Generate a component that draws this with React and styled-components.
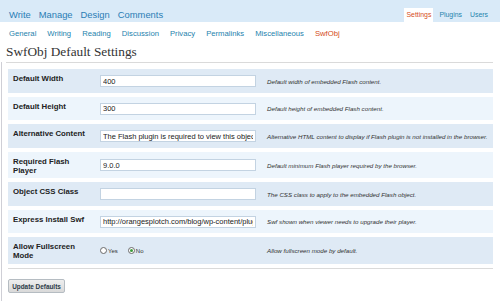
import styled, { createGlobalStyle } from "styled-components";

const GlobalStyle = createGlobalStyle`
  html, body {
    margin: 0;
    padding: 0;
    background: #ffffff;
    font-family: "Liberation Sans", Arial, sans-serif;
  }
`;

const Header = styled.div`
  height: 22px;
  background-color: #d9eaf8;
  display: flex;
  justify-content: space-between;
`;

const MainNav = styled.div`
  display: flex;
  gap: 8px;
  padding: 9px 0 0 9px;
  font-size: 9.4px;
  line-height: 12px;
`;

const NavLink = styled.span`
  color: #2a7db5;
`;

const Tabs = styled.div`
  display: flex;
  align-items: flex-end;
  gap: 4px;
  padding-right: 10px;
`;

const Tab = styled.span`
  height: 14px;
  line-height: 14px;
  padding: 0 2px;
  font-size: 6.9px;
  color: ${(props) => (props.active ? "#d54e21" : "#2583ad")};
  background-color: ${(props) => (props.active ? "#ffffff" : "transparent")};
`;

const SubNav = styled.div`
  height: 22px;
  display: flex;
  align-items: center;
  gap: 11px;
  padding-left: 9px;
  font-size: 7.7px;
`;

const SubLink = styled.span`
  color: ${(props) => (props.active ? "#d54e21" : "#2583ad")};
`;

const Title = styled.h2`
  margin: 0 0 0 6px;
  height: 16px;
  line-height: 16px;
  font-family: "Liberation Serif", "Times New Roman", serif;
  font-weight: normal;
  font-size: 13.3px;
  color: #333333;
`;

const Wrap = styled.div`
  margin-left: 1px;
  border-left: 1px solid #cfcfd6;
  padding-bottom: 8px;
`;

const Rule = styled.div`
  height: 1px;
  background-color: #dadada;
  margin: ${(props) => props.margin};
`;

const Table = styled.div`
  margin: 6px 7px 0 6px;
`;

const Row = styled.div`
  display: grid;
  grid-template-columns: 92px 167px 1fr;
  height: ${(props) => props.h}px;
  margin-bottom: 4px;
  background-color: ${(props) => (props.alt ? "#edf5fc" : "#dfeaf5")};
`;

const Label = styled.div`
  padding: 6px 14px 0 5px;
  font-size: 7.8px;
  line-height: 8.5px;
  font-weight: bold;
  color: #222222;
`;

const Field = styled.div`
  display: flex;
  align-items: center;
  gap: 10px;
`;

const Input = styled.input`
  box-sizing: border-box;
  width: 156px;
  height: 12px;
  margin: 0;
  padding: 0 2px;
  border: 1px solid #c3d3e2;
  background: #ffffff;
  font-family: "Liberation Sans", Arial, sans-serif;
  font-size: 7.5px;
  color: #222222;
  outline: none;
`;

const Desc = styled.div`
  display: flex;
  align-items: center;
  font-size: 6.2px;
  font-style: italic;
  color: #333333;
  white-space: nowrap;
`;

const Radio = styled.span`
  display: flex;
  align-items: center;
  gap: 1px;
  font-size: 6px;
  color: #333333;
`;

const Dot = styled.span`
  box-sizing: border-box;
  width: 7px;
  height: 7px;
  border-radius: 50%;
  border: 1px solid #6a6a6a;
  background: #ffffff;
  display: flex;
  align-items: center;
  justify-content: center;
  &::after {
    content: "";
    width: 3px;
    height: 3px;
    border-radius: 50%;
    background: ${(props) => (props.checked ? "#3c9a3c" : "transparent")};
  }
`;

const Button = styled.button`
  margin: 10px 0 0 6px;
  width: 57px;
  height: 14px;
  padding: 0;
  border: 1px solid #b5bcc2;
  border-radius: 2px;
  background: linear-gradient(#eeeeee, #d9d9d9);
  font-family: "Liberation Sans", Arial, sans-serif;
  font-size: 6.4px;
  font-weight: bold;
  color: #2c3a48;
`;

const rows = [
  { label: "Default Width", value: "400", desc: "Default width of embedded Flash content.", h: 24 },
  { label: "Default Height", value: "300", desc: "Default height of embedded Flash content.", h: 23 },
  {
    label: "Alternative Content",
    value: "The Flash plugin is required to view this object.",
    desc: "Alternative HTML content to display if Flash plugin is not installed in the browser.",
    h: 24,
  },
  { label: "Required Flash Player", value: "9.0.0", desc: "Default minimum Flash player required by the browser.", h: 26 },
  { label: "Object CSS Class", value: "", desc: "The CSS class to apply to the embedded Flash object.", h: 24 },
  {
    label: "Express Install Swf",
    value: "http://orangesplotch.com/blog/wp-content/plugins/swfobj/expressInstall.swf",
    desc: "Swf shown when viewer needs to upgrade their player.",
    h: 23,
  },
];

const App = () => {
  return (
    <>
      <GlobalStyle />
      <Header>
        <MainNav>
          <NavLink>Write</NavLink>
          <NavLink>Manage</NavLink>
          <NavLink>Design</NavLink>
          <NavLink>Comments</NavLink>
        </MainNav>
        <Tabs>
          <Tab active>Settings</Tab>
          <Tab>Plugins</Tab>
          <Tab>Users</Tab>
        </Tabs>
      </Header>
      <SubNav>
        {["General", "Writing", "Reading", "Discussion", "Privacy", "Permalinks", "Miscellaneous"].map((s) => (
          <SubLink key={s}>{s}</SubLink>
        ))}
        <SubLink active>SwfObj</SubLink>
      </SubNav>
      <Title>SwfObj Default Settings</Title>
      <Wrap>
        <Rule margin="2px 7px 0 4px" />
        <Table>
          {rows.map((r, i) => (
            <Row key={r.label} h={r.h} alt={i % 2 === 1}>
              <Label>{r.label}</Label>
              <Field>
                <Input defaultValue={r.value} />
              </Field>
              <Desc>{r.desc}</Desc>
            </Row>
          ))}
          <Row h={27}>
            <Label>Allow Fullscreen Mode</Label>
            <Field>
              <Radio>
                <Dot />
                Yes
              </Radio>
              <Radio>
                <Dot checked />
                No
              </Radio>
            </Field>
            <Desc>Allow fullscreen mode by default.</Desc>
          </Row>
        </Table>
        <Rule margin="0 7px 0 6px" />
        <Button>Update Defaults</Button>
      </Wrap>
    </>
  );
};

export default App;
